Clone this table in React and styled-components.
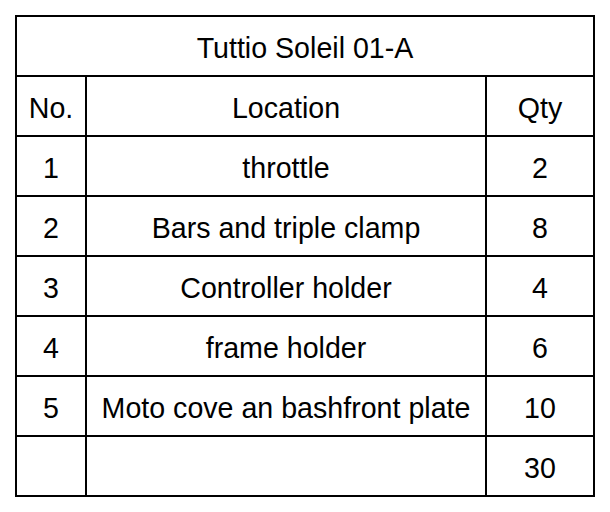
import React from "react"
import styled, { createGlobalStyle } from "styled-components"

const rows = [
	{ no: "1", location: "throttle", qty: "2" },
	{ no: "2", location: "Bars and triple clamp", qty: "8" },
	{ no: "3", location: "Controller holder", qty: "4" },
	{ no: "4", location: "frame holder", qty: "6" },
	{ no: "5", location: "Moto cove an bashfront plate", qty: "10" },
	{ no: "", location: "", qty: "30" },
]

const App = () => {
	return (
		<>
			<GlobalStyle />
			<Page>
				<PartsTable>
					<colgroup>
						<col style={{ width: 70 }} />
						<col style={{ width: 400 }} />
						<col style={{ width: 108 }} />
					</colgroup>
					<tbody>
						<Row>
							<Cell colSpan={3}>Tuttio Soleil 01-A</Cell>
						</Row>
						<Row>
							<Cell>No.</Cell>
							<Cell>Location</Cell>
							<Cell>Qty</Cell>
						</Row>
						{rows.map((row, i) => (
							<Row key={i}>
								<Cell>{row.no}</Cell>
								<Cell>{row.location}</Cell>
								<Cell>{row.qty}</Cell>
							</Row>
						))}
					</tbody>
				</PartsTable>
			</Page>
		</>
	)
}

const GlobalStyle = createGlobalStyle`
	html, body {
		margin: 0;
		padding: 0;
		background: #ffffff;
	}
`

const Page = styled.div`
	width: 610px;
	height: 512px;
	padding: 15px 0 0 15px;
	box-sizing: border-box;
	font-family: "Liberation Sans", Arial, sans-serif;
	color: #000000;
`

const PartsTable = styled.table`
	border-collapse: collapse;
	table-layout: fixed;
	width: 580px;
	border: 2px solid #000000;
`

const Row = styled.tr`
	height: 60px;
`

const Cell = styled.td`
	border: 2px solid #000000;
	padding: 4px 0 0;
	text-align: center;
	vertical-align: middle;
	font-size: 28.6px;
	line-height: 1;
`

export default App
